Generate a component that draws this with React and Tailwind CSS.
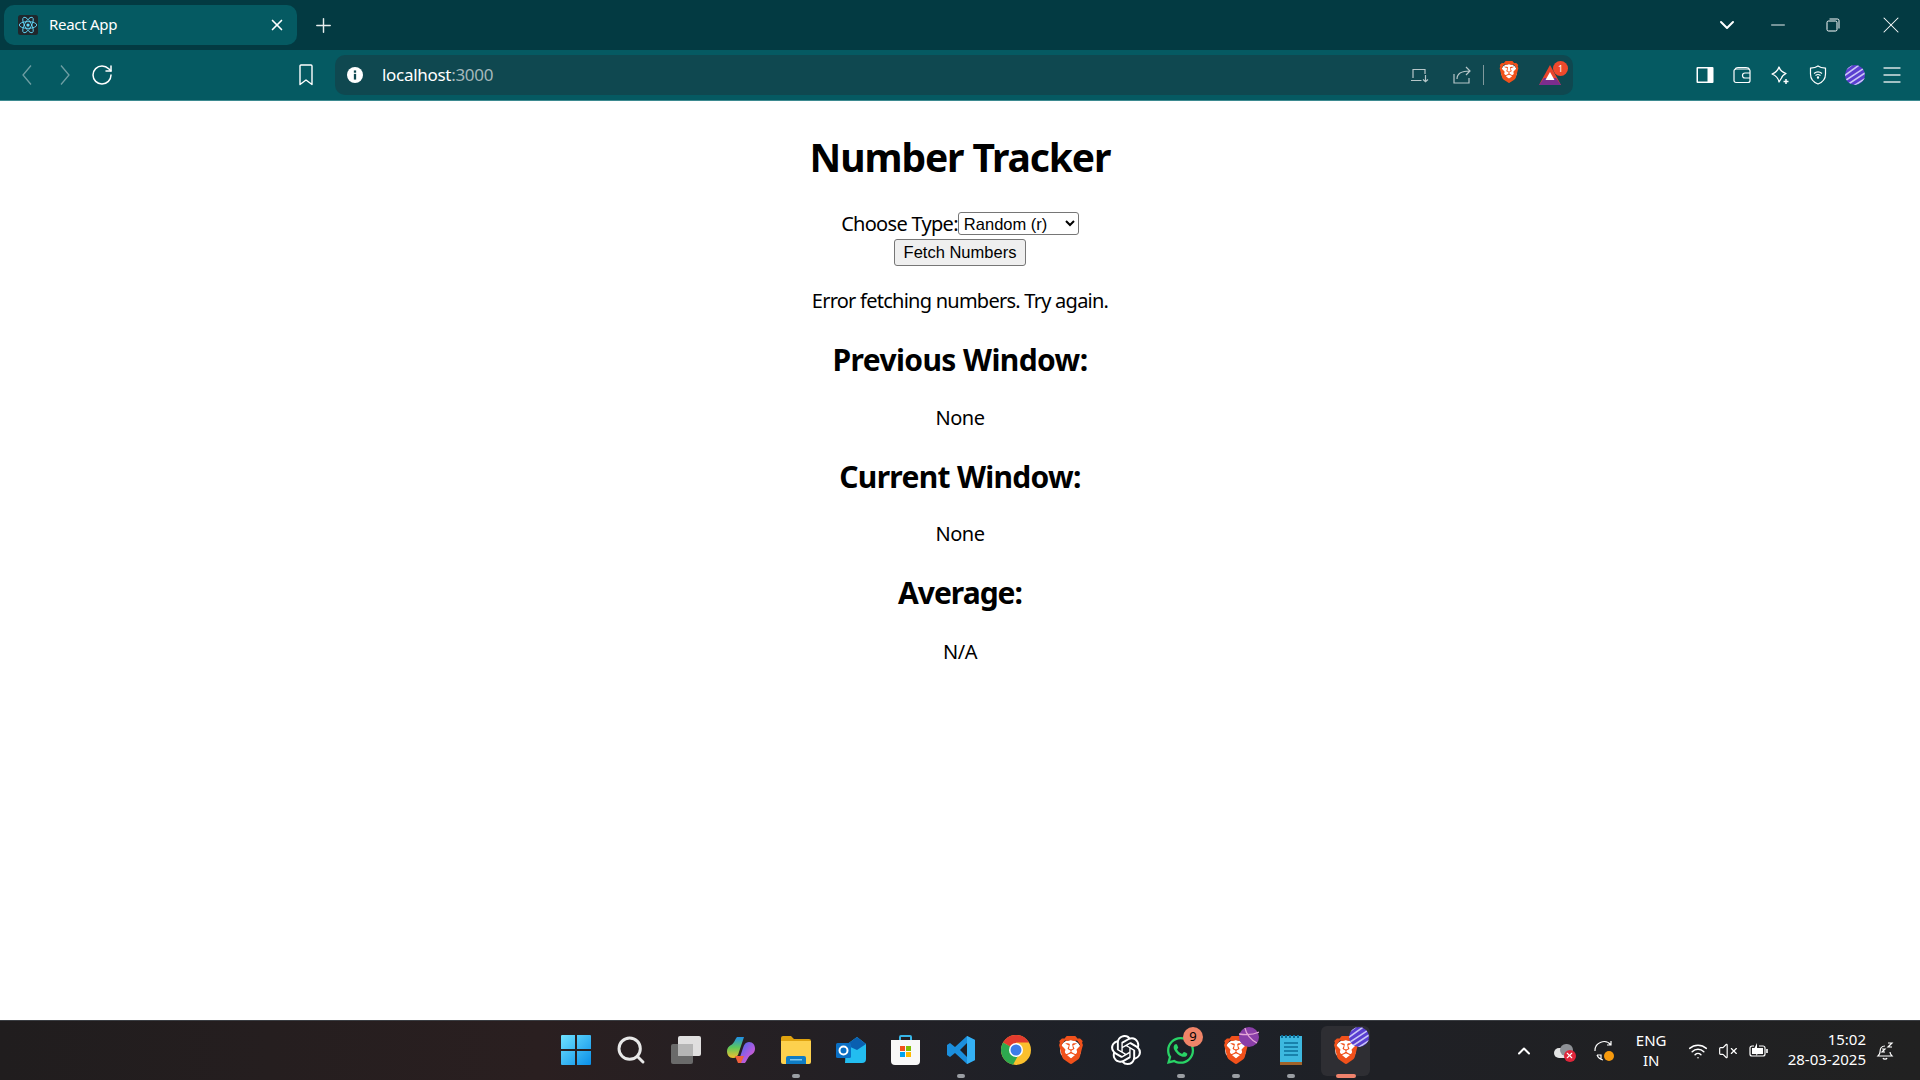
import React from "react";
import { SiBrave, SiOpenai } from "react-icons/si";
import { FaWhatsapp } from "react-icons/fa";
import { ChevronDown, ChevronUp, RotateCw, Menu, Minus, Plus, Search, Wifi, VolumeX, X } from "lucide-react";

const uiFont = "font-['Noto_Sans','Open_Sans',sans-serif]";

const BraveLogo = ({ size = 24 }) => (
  <span className="relative inline-flex items-center justify-center" style={{ width: size, height: size }}>
    <span className="absolute inset-[14%] rounded-full bg-white" />
    <SiBrave size={size} color="#f1511b" className="relative" />
  </span>
);

const StripedBall = ({ size = 20, className = "" }) => (
  <svg width={size} height={size} viewBox="0 0 20 20" className={className}>
    <defs>
      <clipPath id="ball">
        <circle cx="10" cy="10" r="10" />
      </clipPath>
    </defs>
    <g clipPath="url(#ball)">
      <rect width="20" height="20" fill="#5a3fd0" />
      <path d="M-4 8L12 -4M-4 13L17 -2M-2 17L21 2M2 20L23 6M7 22L24 11" stroke="#c9c6f5" strokeWidth="1.6" />
    </g>
  </svg>
);

const ReactFavicon = () => (
  <svg width="20" height="20" viewBox="0 0 16 16">
    <rect width="16" height="16" rx="2" fill="#20272c" />
    <g fill="none" stroke="#61dafb" strokeWidth="0.7">
      <ellipse cx="8" cy="8" rx="7" ry="2.7" />
      <ellipse cx="8" cy="8" rx="7" ry="2.7" transform="rotate(60 8 8)" />
      <ellipse cx="8" cy="8" rx="7" ry="2.7" transform="rotate(120 8 8)" />
    </g>
    <circle cx="8" cy="8" r="1.3" fill="#61dafb" />
  </svg>
);

const ToolbarRight = () => (
  <div className="flex items-center">
    {/* side panel */}
    <svg width="18" height="18" viewBox="0 0 18 18" className="mr-[19px]">
      <rect x="0.500" y="1" width="17" height="16" rx="1" fill="#fff" />
      <rect x="2" y="2.500" width="9.500" height="13" fill="#055a62" />
    </svg>
    {/* wallet */}
    <svg width="18" height="18" viewBox="0 0 18 18" fill="none" stroke="#fff" strokeWidth="1.2" className="mr-[19px]">
      <rect x="1" y="3" width="16" height="13.500" rx="2" />
      <path d="M2 3.500c.5-1.500 1.500-2 3-2h8c2 0 3 .5 3.500 2M17 7h-5a2.500 2.500 0 0 0 0 5h5" />
    </svg>
    {/* leo */}
    <svg width="20" height="20" viewBox="0 0 20 20" fill="none" stroke="#fff" strokeWidth="1.3" className="mr-[19px]">
      <path d="M9 2c1 3 2.500 5 7 6.500-3 1.500-4 2.500-4.500 4.500L9 17c-.5-3-2-6-7-8 4-1.500 6-4 7-7z" strokeLinejoin="round" />
      <path d="M16 14v5M13.500 16.500h5" strokeWidth="1.500" />
    </svg>
    {/* vpn shield */}
    <svg width="18" height="20" viewBox="0 0 18 20" fill="none" stroke="#fff" strokeWidth="1.2" className="mr-[18px]">
      <path d="M9 1c2 1.500 4 2 7.500 2.200V9c0 5-3.500 8.500-7.500 10-4-1.500-7.500-5-7.500-10V3.200C5 3 7 2.500 9 1z" />
      <path d="M5 8.500c2.500-2 5.500-2 8 0M6.500 10.500c1.500-1.200 3.500-1.200 5 0" />
      <circle cx="9" cy="12.500" r=".6" fill="#fff" />
    </svg>
    <StripedBall size={20} className="mr-[15px]" />
    <Menu size={24} color="#d8e4e5" strokeWidth={1.3} />
  </div>
);

const UrlBar = () => (
  <div className="flex h-10 w-[1238px] items-center rounded-[10px] bg-[#0f4850] pl-[12px] pr-[12px]">
    <svg width="16" height="16" viewBox="0 0 14 14">
      <circle cx="7" cy="7" r="7" fill="#fff" />
      <rect x="6" y="6" width="2" height="5" fill="#0f4850" />
      <rect x="6" y="3" width="2" height="2" fill="#0f4850" />
    </svg>
    <span className={`ml-[19px] text-[17px] tracking-[-0.3px] text-white ${uiFont}`}>
      localhost<span className="text-[#a4b8bb]">:3000</span>
    </span>
    <div className="ml-auto flex items-center">
      {/* cast */}
      <svg width="20" height="18" viewBox="0 0 20 18" fill="none" stroke="#b6c6c8" strokeWidth="1.200" className="ml-[1px]">
        <path d="M3 12V3.500h12V8M1 14.500h10.500M15.500 9v6.500M13 13.500l2.500 2.300 2.500-2.300" />
      </svg>
      {/* share */}
      <svg width="20" height="20" viewBox="0 0 20 20" fill="none" stroke="#b6c6c8" strokeWidth="1.200" className="ml-[22px]">
        <path d="M2 9v9h15v-5M5 14c0-5 4-8 13-8M14 2l4 4-4 4" />
      </svg>
      <div className="ml-[11px] h-5 w-px bg-[#80999c]" />
      <div className="ml-[14px]">
        <BraveLogo size={22} />
      </div>
      {/* rewards triangle */}
      <div className="relative ml-[19px] h-[22px] w-[22px]">
        <svg width="22" height="22" viewBox="0 0 22 22">
          <path d="M11 1L0 21h22z" fill="#e8452c" />
          <path d="M0 21h22l-5-7H5z" fill="#7b2d8e" />
          <path d="M11 8l4.500 8h-9z" fill="#fff" />
        </svg>
        <span className="absolute -right-[7px] -top-[3px] flex h-[15px] w-[15px] items-center justify-center rounded-full bg-[#f0492c] font-['Noto_Sans',sans-serif] text-[9px] text-white">
          1
        </span>
      </div>
    </div>
  </div>
);

const BrowserChrome = () => (
  <div>
    <div className="flex h-[50px] items-center bg-[#033a42] pl-[4px]">
      <div className="flex h-10 w-[293px] items-center rounded-[10px] bg-[#055a62] pl-[14px] pr-[11px]">
        <ReactFavicon />
        <span className={`ml-[11px] pb-[1px] text-[15px] tracking-[-0.3px] text-white ${uiFont}`}>React App</span>
        <X size={18} color="#fff" strokeWidth={2.2} className="ml-auto" />
      </div>
      <Plus size={23} color="#e8eeee" strokeWidth={1.5} className="ml-[15px]" />
      <div className="ml-auto flex items-center pr-[15px]">
        <ChevronDown size={24} color="#fff" strokeWidth={2} className="mr-[28px]" />
        <Minus size={22} color="#fff" strokeWidth={1} className="mr-[37px]" />
        <svg width="14" height="14" viewBox="0 0 14 14" fill="none" stroke="#fff" strokeWidth="1" className="mr-[37px]">
          <rect x="1" y="3" width="10" height="10" rx="1.500" />
          <path d="M3.500 1h8a1.500 1.500 0 0 1 1.500 1.500v8" />
        </svg>
        <X size={28} color="#fff" strokeWidth={0.9} />
      </div>
    </div>
    <div className="flex h-[51px] items-center border-b border-[#3d8a90] bg-[#055a62] pl-[21px] pr-[16px]">
      <svg width="12" height="22" viewBox="0 0 12 22" fill="none" stroke="#6f9ea3" strokeWidth="1.300">
        <path d="M10 1.500L2 11l8 9.500" />
      </svg>
      <svg width="12" height="22" viewBox="0 0 12 22" fill="none" stroke="#6f9ea3" strokeWidth="1.300" className="ml-[26px]">
        <path d="M2 1.500L10 11l-8 9.500" />
      </svg>
      <RotateCw size={24} color="#fff" strokeWidth={1.500} className="ml-[19px]" />
      <svg width="14" height="22" viewBox="0 0 14 22" fill="none" stroke="#fff" strokeWidth="1.400" strokeLinejoin="round" className="ml-[185px]">
        <path d="M1 2a1 1 0 0 1 1-1h10a1 1 0 0 1 1 1v18.500l-6-4.500-6 4.500z" />
      </svg>
      <div className="ml-[22px]">
        <UrlBar />
      </div>
      <div className="ml-auto">
        <ToolbarRight />
      </div>
    </div>
  </div>
);

const TrackerPage = () => (
  <main className={`flex flex-1 flex-col items-center text-center text-[20px] text-black ${uiFont}`}>
    <h1 className="mt-[26px] text-[39px] font-bold leading-[60px] tracking-[-1.1px]">Number Tracker</h1>
    <div className="mt-[23px] flex items-center leading-[27px]">
      <label className="tracking-[-0.7px]">Choose Type:</label>
      <select className="h-[23px] w-[121px] appearance-auto rounded-[3px] border border-[#767676] bg-white pl-[1px] font-['Liberation_Sans',sans-serif] text-[16.5px] leading-none">
        <option>Random (r)</option>
      </select>
    </div>
    <button className="mt-[2px] h-[27px] w-[132px] rounded-[3px] border border-[#767676] bg-[#efefef] font-['Liberation_Sans',sans-serif] text-[16.5px] leading-none">
      Fetch Numbers
    </button>
    <p className="mt-[21px] leading-[27px] tracking-[-0.75px]">Error fetching numbers. Try again.</p>
    <h2 className="mt-[26px] text-[30px] font-bold leading-[40px] tracking-[-0.6px]">Previous Window:</h2>
    <p className="mt-[24px] leading-[27px] tracking-[-0.5px]">None</p>
    <h2 className="mt-[26px] text-[30px] font-bold leading-[40px] tracking-[-0.7px]">Current Window:</h2>
    <p className="mt-[23px] leading-[27px] tracking-[-0.5px]">None</p>
    <h2 className="mt-[26px] text-[30px] font-bold leading-[40px] tracking-[-1px]">Average:</h2>
    <p className="mt-[25px] leading-[27px] tracking-[-0.5px]">N/A</p>
  </main>
);

const Dot = ({ color = "#9a9ea3", wide }) => (
  <span
    className={`absolute bottom-[3px] left-1/2 h-[4px] -translate-x-1/2 rounded-full ${wide ? "w-5" : "w-2"}`}
    style={{ backgroundColor: color }}
  />
);

const TaskIcon = ({ children, dot, active }) => (
  <div className="relative flex h-[60px] w-[55px] items-center justify-center">
    {active && <div className="absolute inset-x-[3px] inset-y-[5px] rounded-md bg-[#2e2e33]" />}
    <div className="relative -mt-[1px] flex items-center justify-center">{children}</div>
    {dot && <Dot />}
    {active && <Dot color="#f0826c" wide />}
  </div>
);

const TaskIcons = () => (
  <div className="ml-[1px] flex">
    <TaskIcon>
      <svg width="30" height="30" viewBox="0 0 30 30">
        <defs>
          <linearGradient id="win" x1="0" y1="0" x2="1" y2="1">
            <stop offset="0" stopColor="#6fe2ff" />
            <stop offset="1" stopColor="#0a8fe8" />
          </linearGradient>
        </defs>
        <path d="M0 1a1 1 0 0 1 1-1h13v14H0zM16 0h13a1 1 0 0 1 1 1v13H16zM0 16h14v14H1a1 1 0 0 1-1-1zM16 16h14v13a1 1 0 0 1-1 1H16z" fill="url(#win)" />
      </svg>
    </TaskIcon>
    <TaskIcon>
      <Search size={32} color="#e8e8e8" strokeWidth={2.200} />
    </TaskIcon>
    <TaskIcon>
      <svg width="30" height="28" viewBox="0 0 30 28">
        <rect x="0" y="8" width="22" height="20" rx="2" fill="#6a6a6a" />
        <rect x="7" y="0" width="23" height="20" rx="2" fill="#f0f0f0" fillOpacity="0.92" />
        <rect x="7" y="8" width="15" height="12" fill="#b5b5b5" />
      </svg>
    </TaskIcon>
    <TaskIcon>
      <svg width="28" height="28" viewBox="0 0 28 28">
        <defs>
          <linearGradient id="cop1" x1="0" y1="0" x2="0" y2="1">
            <stop offset="0" stopColor="#1f8fe8" />
            <stop offset="0.5" stopColor="#5fc85a" />
            <stop offset="1" stopColor="#f5c02e" />
          </linearGradient>
          <linearGradient id="cop2" x1="0" y1="0" x2="1" y2="1">
            <stop offset="0" stopColor="#2f6ff0" />
            <stop offset="0.6" stopColor="#b05ae0" />
            <stop offset="1" stopColor="#f06fa8" />
          </linearGradient>
        </defs>
        <path d="M10 1h7l-5 15c-1 4-3 6-6 6-4 0-6-3-6-7 0-3 2-5 4-6 3-1 4-6 6-8z" fill="url(#cop1)" />
        <path d="M18 27h-7l5-15c1-4 3-6 6-6 4 0 6 3 6 7 0 3-2 5-4 6-3 1-4 6-6 8z" fill="url(#cop2)" />
        <path d="M8 20h9l-3 7h-3z" fill="#f0603c" />
      </svg>
    </TaskIcon>
    <TaskIcon dot>
      <svg width="30" height="28" viewBox="0 0 30 28">
        <path d="M0 2a2 2 0 0 1 2-2h8l3 3h15a2 2 0 0 1 2 2v3H0z" fill="#e0a30f" />
        <path d="M0 5h30v21a2 2 0 0 1-2 2H2a2 2 0 0 1-2-2z" fill="#fdd14e" />
        <path d="M5 22a2 2 0 0 1 2-2h0 16a2 2 0 0 1 2 2v6H5z" fill="#0f7cc4" />
        <rect x="9" y="23" width="12" height="1.500" fill="#7fc8f0" />
      </svg>
    </TaskIcon>
    <TaskIcon>
      <svg width="30" height="26" viewBox="0 0 30 26">
        <path d="M10 8L21 0l9 7v15a4 4 0 0 1-4 4H9z" fill="#23bdf0" />
        <path d="M10 8L21 0l9 7-9 6z" fill="#0a5fb0" />
        <rect x="0" y="6" width="15" height="15" rx="1.500" fill="#0a6fc4" />
        <circle cx="7.500" cy="13.500" r="4" fill="none" stroke="#fff" strokeWidth="2" />
      </svg>
    </TaskIcon>
    <TaskIcon>
      <svg width="29" height="30" viewBox="0 0 29 30">
        <path d="M9 6V2a1 1 0 0 1 1-1h9a1 1 0 0 1 1 1v4" fill="none" stroke="#38b6e8" strokeWidth="2" />
        <path d="M0 5h29v21a4 4 0 0 1-4 4H4a4 4 0 0 1-4-4z" fill="#f8f8f8" />
        <rect x="9" y="11" width="5" height="5" fill="#f1511b" />
        <rect x="15" y="11" width="5" height="5" fill="#80bc06" />
        <rect x="9" y="17" width="5" height="5" fill="#00a3ee" />
        <rect x="15" y="17" width="5" height="5" fill="#ffb900" />
      </svg>
    </TaskIcon>
    <TaskIcon dot>
      <svg width="30" height="30" viewBox="0 0 30 30">
        <path d="M21 1l8 4v20l-8 4-12-11-5 4-3-2V10l3-2 5 4z" fill="#1b8fdd" />
        <path d="M21 1l8 4v20l-8 4z" fill="#34b0f4" />
        <path d="M21 8l-7 7 7 7z" fill="#1d2026" />
      </svg>
    </TaskIcon>
    <TaskIcon>
      <svg width="30" height="30" viewBox="0 0 30 30">
        <circle cx="15" cy="15" r="15" fill="#fbc02d" />
        <path d="M15 15L2 7.500A15 15 0 0 1 28 7.500H15z" fill="#e33b2e" />
        <path d="M2 7.500A15 15 0 0 0 12 29.700L19 17z" fill="#2da94f" />
        <circle cx="15" cy="15" r="7" fill="#fff" />
        <circle cx="15" cy="15" r="5.500" fill="#3d7de8" />
      </svg>
    </TaskIcon>
    <TaskIcon>
      <BraveLogo size={28} />
    </TaskIcon>
    <TaskIcon>
      <SiOpenai size={30} color="#fff" />
    </TaskIcon>
    <TaskIcon dot>
      <FaWhatsapp size={31} color="#29d366" />
      <span className={`absolute -right-[7px] -top-[8px] flex h-5 w-5 items-center justify-center rounded-full bg-[#f08468] text-[13px] text-black ${uiFont}`}>
        9
      </span>
    </TaskIcon>
    <TaskIcon dot>
      <BraveLogo size={28} />
      <svg width="20" height="20" viewBox="0 0 20 20" className="absolute -right-[9px] -top-[9px]">
        <circle cx="10" cy="10" r="10" fill="#8a3ea8" />
        <path d="M0 7c7 1 14 1 20-2M6 1c1 6 6 12 12 15" stroke="#e6a8d8" strokeWidth="1.300" fill="none" />
      </svg>
    </TaskIcon>
    <TaskIcon dot>
      <svg width="22" height="30" viewBox="0 0 22 30">
        <rect x="0" y="1" width="22" height="29" fill="#3db8e0" />
        <rect x="0" y="27" width="22" height="3" fill="#a0622a" />
        <path d="M1 0h2v3H1zM5 0h2v3H5zM9 0h2v3H9zM13 0h2v3h-2zM17 0h2v3h-2z" fill="#0d6f9a" />
        <path d="M4 8h14M4 12h14M4 16h14M4 20h14" stroke="#0d6f9a" strokeWidth="1.600" />
      </svg>
    </TaskIcon>
    <TaskIcon active>
      <BraveLogo size={28} />
      <StripedBall size={20} className="absolute -right-[9px] -top-[9px]" />
    </TaskIcon>
  </div>
);

const Tray = () => (
  <div className={`absolute inset-y-0 right-0 flex items-center text-white ${uiFont}`}>
    <ChevronUp size={20} strokeWidth={2.400} className="mr-[20px]" />
    {/* onedrive-style cloud with error badge */}
    <span className="relative mr-[21px] block h-[14px] w-[19px]">
      <span className="absolute bottom-0 left-0 h-[10px] w-[17px] rounded-full bg-[#e4e4e4]" />
      <span className="absolute right-0 top-0 h-[12px] w-[13px] rounded-full bg-[#8e9196]" />
      <span className="absolute -bottom-[4px] -right-[3px] flex h-[12px] w-[12px] items-center justify-center rounded-full bg-[#e0253a]">
        <X size={9} strokeWidth={3} color="#fff" />
      </span>
    </span>
    <svg width="22" height="22" viewBox="0 0 22 22" fill="none" stroke="#fff" strokeWidth="1.200" className="mr-[21px]">
      <path d="M1 11A9 9 0 0 1 17 5M17 1v4h-4M3 15h4v4M3 15a9 9 0 0 0 6 5" />
      <circle cx="15" cy="16" r="5" fill="#f79a0d" stroke="none" />
    </svg>
    <div className="mr-[22px] flex w-[29px] flex-col items-center pb-[2px] text-[15px] leading-[20px]">
      <span>ENG</span>
      <span>IN</span>
    </div>
    <Wifi size={20} strokeWidth={1.800} className="mr-[10px]" />
    <VolumeX size={20} strokeWidth={1.400} className="mr-[11px]" />
    <svg width="20" height="16" viewBox="0 0 20 16" fill="none" stroke="#fff" strokeWidth="1.200" className="mr-[19px]">
      <path d="M5 3H3a2 2 0 0 0-2 2v6a2 2 0 0 0 2 2h11a2 2 0 0 0 2-2V5a2 2 0 0 0-2-2h-4" />
      <path d="M8 0L4 8h4l-1 5 5-6H8z" fill="#fff" stroke="none" />
      <rect x="3" y="5" width="11" height="6" fill="#fff" stroke="none" />
      <path d="M18 6v4" strokeWidth="1.600" />
    </svg>
    <div className="flex flex-col items-end pb-[3px] text-[15px] leading-[20px]">
      <span>15:02</span>
      <span>28-03-2025</span>
    </div>
    <div className="ml-[10px] mr-[26px]">
      <svg width="18" height="20" viewBox="0 0 18 20" fill="none" stroke="#fff" strokeWidth="1.200">
        <path d="M9 5C5 5 4 8 4 11c0 2-1 3-2 4h14c-1-1-2-2-2-4M7 17c.5 1.500 3.500 1.500 4 0" />
        <path d="M6 8h3l-3 3h3M12 2h4l-4 4h4" />
      </svg>
    </div>
  </div>
);

const Taskbar = () => (
  <footer className="relative flex h-[60px] items-center justify-center border-t border-[#3a3d42] bg-[linear-gradient(90deg,#201d1e_0%,#2a1f20_28%,#1c2129_60%,#1f2025_72%,#212121_100%)]">
    <TaskIcons />
    <Tray />
  </footer>
);

export default function App() {
  return (
    <div className="flex h-[1080px] w-[1920px] flex-col overflow-hidden bg-white">
      <BrowserChrome />
      <TrackerPage />
      <Taskbar />
    </div>
  );
}
